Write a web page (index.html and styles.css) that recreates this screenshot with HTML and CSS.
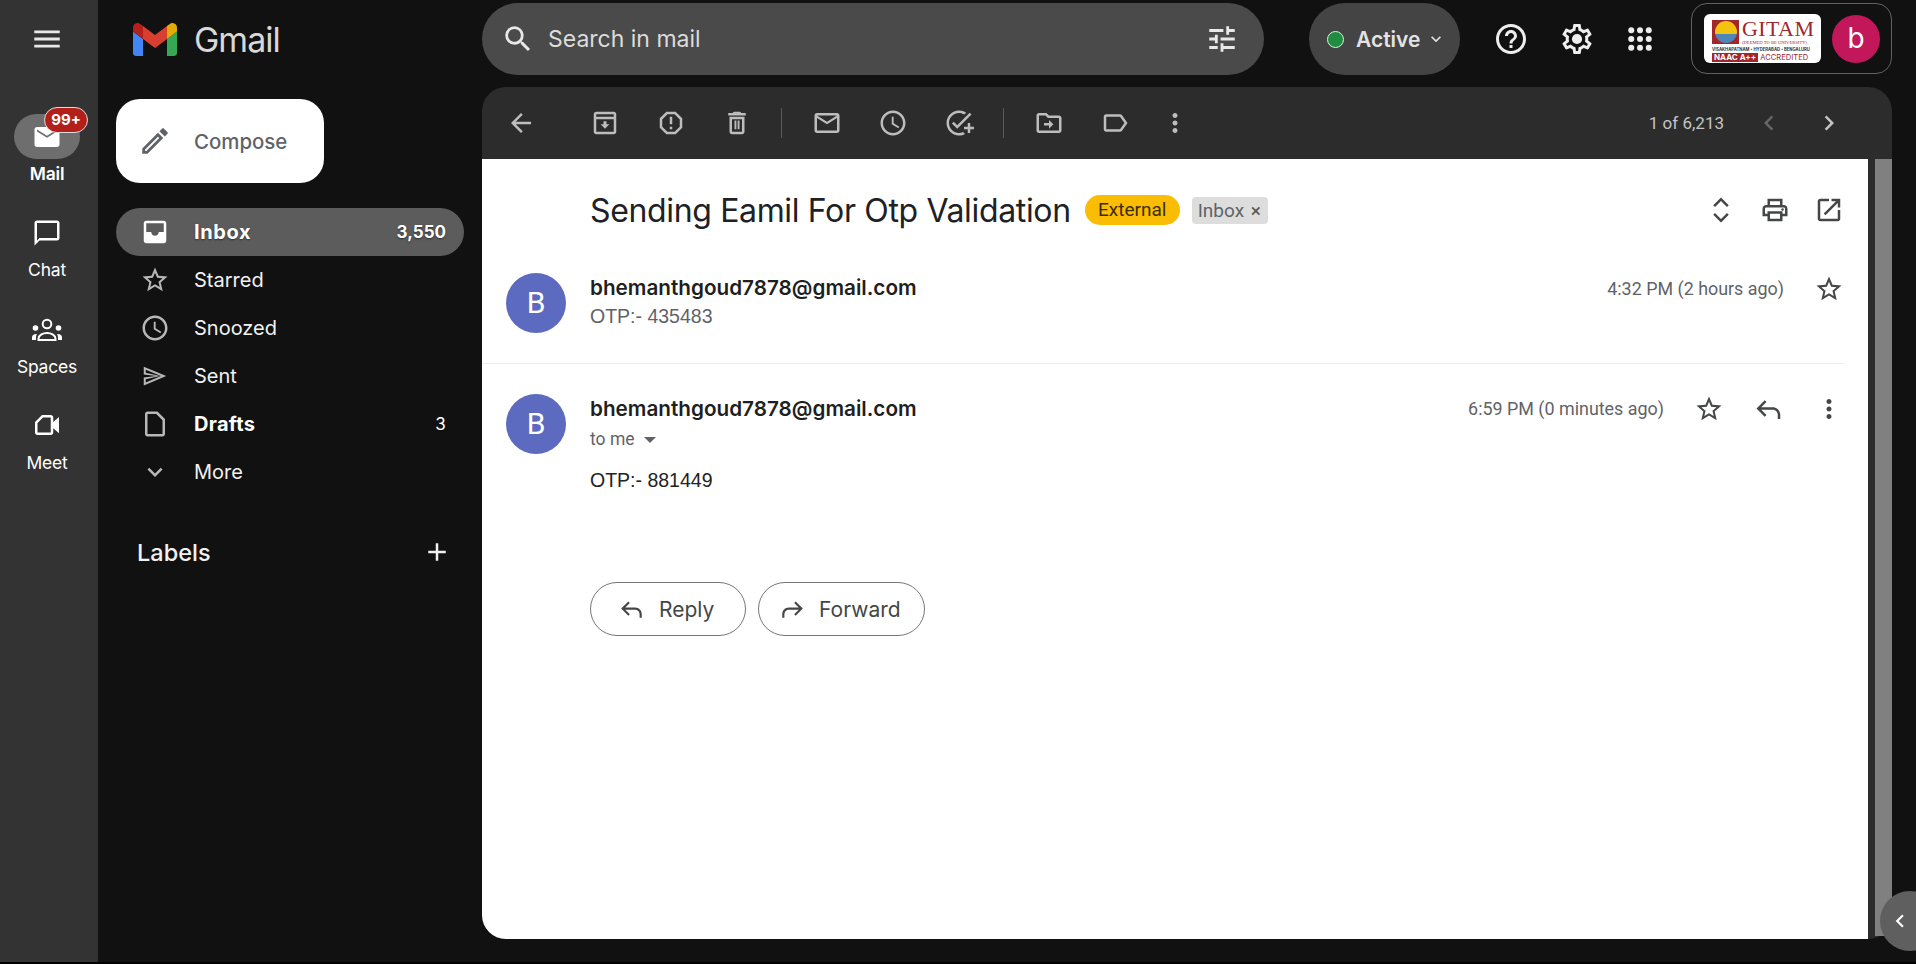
FILE: index.html
```html
<!DOCTYPE HTML>
<html>
    <head>
        <meta charset="utf-8">
        <title>Gmail</title>
        <link rel="stylesheet" href="styles.css">
    </head>

    <body>
        <svg class="sprite" width="0" height="0">
            <symbol id="i-menu" viewBox="0 0 24 24"><path d="M3 18h18v-2H3v2zm0-5h18v-2H3v2zm0-7v2h18V6H3z"/></symbol>
            <symbol id="i-search" viewBox="0 0 24 24"><path d="M15.5 14h-.79l-.28-.27A6.471 6.471 0 0 0 16 9.5 6.5 6.5 0 1 0 9.5 16c1.61 0 3.09-.59 4.23-1.57l.27.28v.79l5 4.99L20.49 19l-4.99-5zm-6 0C7.01 14 5 11.99 5 9.5S7.01 5 9.5 5 14 7.01 14 9.5 11.99 14 9.5 14z"/></symbol>
            <symbol id="i-tune" viewBox="0 0 24 24"><path d="M3 17v2h6v-2H3zM3 5v2h10V5H3zm10 16v-2h8v-2h-8v-2h-2v6h2zM7 9v2H3v2h4v2h2V9H7zm14 4v-2H11v2h10zm-6-4h2V7h4V5h-4V3h-2v6z"/></symbol>
            <symbol id="i-back" viewBox="0 0 24 24"><path d="M20 11H7.83l5.59-5.59L12 4l-8 8 8 8 1.41-1.41L7.83 13H20v-2z"/></symbol>
            <symbol id="i-star" viewBox="0 0 24 24"><path d="M22 9.24l-7.19-.62L12 2 9.19 8.63 2 9.24l5.46 4.73L5.82 21 12 17.27 18.18 21l-1.63-7.03L22 9.24zM12 15.4l-3.76 2.27 1-4.28-3.32-2.88 4.38-.38L12 6.1l1.71 4.04 4.38.38-3.32 2.88 1 4.28L12 15.4z"/></symbol>
            <symbol id="i-clock" viewBox="0 0 24 24"><path d="M11.99 2C6.47 2 2 6.48 2 12s4.47 10 9.99 10C17.52 22 22 17.52 22 12S17.52 2 11.99 2zM12 20c-4.42 0-8-3.58-8-8s3.58-8 8-8 8 3.58 8 8-3.58 8-8 8zm.5-13H11v6l5.25 3.15.75-1.23-4.5-2.67z"/></symbol>
            <symbol id="i-send" viewBox="0 0 24 24"><path fill-rule="evenodd" d="M3 4.5v6.3l10 1.2-10 1.2v6.3L21 12 3 4.5zm1.6 2.4L16.8 12 4.6 17.1v-2.5L16 12 4.6 9.4V6.9z"/></symbol>
            <symbol id="i-draft" viewBox="0 0 24 24"><path d="M14 2H6c-1.1 0-2 .9-2 2v16c0 1.1.9 2 2 2h12c1.1 0 2-.9 2-2V8l-6-6zM6 20V4h7l5 5v11H6z"/></symbol>
            <symbol id="i-down" viewBox="0 0 24 24"><path d="M16.59 8.59L12 13.17 7.41 8.59 6 10l6 6 6-6z"/></symbol>
            <symbol id="i-add" viewBox="0 0 24 24"><path d="M19 13h-6v6h-2v-6H5v-2h6V5h2v6h6v2z"/></symbol>
            <symbol id="i-pencil" viewBox="0 0 24 24"><path d="M3 17.25V21h3.75L17.81 9.94l-3.75-3.75L3 17.25zM5.92 19H5v-.92l9.06-9.06.92.92L5.92 19zM20.71 5.63l-2.34-2.34c-.2-.2-.45-.29-.71-.29s-.51.1-.7.29l-1.83 1.83 3.75 3.75 1.83-1.83c.39-.39.39-1.02 0-1.41z"/></symbol>
            <symbol id="i-inbox" viewBox="0 0 24 24"><path d="M19 3H5c-1.1 0-2 .9-2 2v14c0 1.1.9 2 2 2h14c1.1 0 2-.9 2-2V5c0-1.1-.9-2-2-2zm0 9h-4c0 1.66-1.35 3-3 3s-3-1.34-3-3H5V5h14v7z"/></symbol>
            <symbol id="i-chat" viewBox="0 0 24 24"><path d="M20 2H4c-1.1 0-2 .9-2 2v18l4-4h14c1.1 0 2-.9 2-2V4c0-1.1-.9-2-2-2zm0 14H6l-2 2V4h16v12z"/></symbol>
            <symbol id="i-spaces" viewBox="0 0 30 30">
                <circle cx="15" cy="10" r="4.3" fill="none" stroke="currentColor" stroke-width="2"/>
                <circle cx="3.5" cy="14" r="2.8"/>
                <circle cx="26.5" cy="14" r="2.8"/>
                <path d="M6.5 26v-1.5c0-3 4-5.5 8.5-5.5s8.5 2.5 8.5 5.5V26z" fill="none" stroke="currentColor" stroke-width="2"/>
                <path d="M0 26v-2.5c0-2 1.5-3.5 4.5-3.5h.5c-.6 1-1 2.5-1 4v2zM30 26v-2.5c0-2-1.5-3.5-4.500-3.500h-.5c.6 1 1 2.500 1 4v2z"/>
            </symbol>
            <symbol id="i-meet" viewBox="0 0 24 24"><path d="M8 4L2.4 9.6V18c0 1.1.9 2 2 2H15c1.1 0 2-.9 2-2v-3.5l4.6 4v-13l-4.6 4V6c0-1.1-.9-2-2-2H8zm.8 2H15v12H4.4v-7.6L8.8 6z"/></symbol>
            <symbol id="i-archive" viewBox="0 0 24 24"><path d="M19 3H5c-1.1 0-2 .9-2 2v14c0 1.1.9 2 2 2h14c1.1 0 2-.9 2-2V5c0-1.1-.9-2-2-2zM5 5h14v2H5V5zm0 14V9h14v10H5zm8.2-8.5h-2.4V13H8.5l3.5 3.5 3.5-3.5h-2.3z"/></symbol>
            <symbol id="i-report" viewBox="0 0 24 24"><path d="M15.73 3H8.27L3 8.27v7.46L8.27 21h7.46L21 15.73V8.27L15.73 3zM19 14.9L14.9 19H9.1L5 14.9V9.1L9.1 5h5.8L19 9.1v5.8z"/><path d="M11 7h2v6h-2zm0 8h2v2h-2z"/></symbol>
            <symbol id="i-trash" viewBox="0 0 24 24"><path d="M16 9v10H8V9h8m-1.5-6h-5l-1 1H5v2h14V4h-3.5l-1-1zM18 7H6v12c0 1.1.9 2 2 2h8c1.1 0 2-.9 2-2V7z"/><path d="M10 10h1.5v7H10zm2.5 0H14v7h-1.5z"/></symbol>
            <symbol id="i-mail" viewBox="0 0 24 24"><path d="M22 6c0-1.1-.9-2-2-2H4c-1.1 0-2 .9-2 2v12c0 1.1.9 2 2 2h16c1.1 0 2-.9 2-2V6zm-2 0l-8 5-8-5h16zm0 12H4V8l8 5 8-5v10z"/></symbol>
            <symbol id="i-mailfill" viewBox="0 0 24 24"><path d="M20 4H4c-1.1 0-2 .9-2 2v12c0 1.1.9 2 2 2h16c1.1 0 2-.9 2-2V6c0-1.1-.9-2-2-2zm0 3.5l-8 5-8-5V6l8 5 8-5v1.5z"/></symbol>
            <symbol id="i-task" viewBox="0 0 24 24"><path d="M22 5.18L10.59 16.6l-4.24-4.24 1.41-1.41 2.83 2.83 10-10L22 5.18zM12 20c-4.41 0-8-3.59-8-8s3.59-8 8-8c1.57 0 3.04.46 4.28 1.25l1.45-1.45C16.1 2.67 14.13 2 12 2 6.48 2 2 6.48 2 12s4.48 10 10 10c1.73 0 3.36-.44 4.78-1.22l-1.5-1.5c-1 .46-2.11.72-3.28.72zm7-5h-3v2h3v3h2v-3h3v-2h-3v-3h-2v3z"/></symbol>
            <symbol id="i-move" viewBox="0 0 24 24"><path d="M20 6h-8l-2-2H4c-1.11 0-1.99.89-1.99 2L2 18c0 1.11.89 2 2 2h16c1.11 0 2-.89 2-2V8c0-1.11-.89-2-2-2zm0 12H4V6h5.17l2 2H20v10zm-8-4H8v-2h4V9.5l3.5 3.5-3.5 3.5V14z"/></symbol>
            <symbol id="i-label" viewBox="0 0 24 24"><path d="M17.63 5.84C17.27 5.33 16.67 5 16 5L5 5.01C3.9 5.01 3 5.9 3 7v10c0 1.1.9 1.99 2 1.99L16 19c.67 0 1.27-.33 1.63-.84L22 12l-4.37-6.16zM16 17H5V7h11l3.55 5L16 17z"/></symbol>
            <symbol id="i-dots" viewBox="0 0 24 24"><path d="M12 8c1.1 0 2-.9 2-2s-.9-2-2-2-2 .9-2 2 .9 2 2 2zm0 2c-1.1 0-2 .9-2 2s.9 2 2 2 2-.9 2-2-.9-2-2-2zm0 6c-1.1 0-2 .9-2 2s.9 2 2 2 2-.9 2-2-.9-2-2-2z"/></symbol>
            <symbol id="i-left" viewBox="0 0 24 24"><path d="M15.41 7.41L14 6l-6 6 6 6 1.41-1.41L10.83 12z"/></symbol>
            <symbol id="i-right" viewBox="0 0 24 24"><path d="M10 6L8.59 7.41 13.17 12l-4.58 4.59L10 18l6-6z"/></symbol>
            <symbol id="i-help" viewBox="0 0 24 24"><path d="M11 18h2v-2h-2v2zm1-16C6.48 2 2 6.48 2 12s4.48 10 10 10 10-4.48 10-10S17.52 2 12 2zm0 18c-4.41 0-8-3.59-8-8s3.59-8 8-8 8 3.59 8 8-3.59 8-8 8zm0-14c-2.21 0-4 1.79-4 4h2c0-1.1.9-2 2-2s2 .9 2 2c0 2-3 1.75-3 5h2c0-2.25 3-2.5 3-5 0-2.21-1.79-4-4-4z"/></symbol>
            <symbol id="i-gear" viewBox="0 0 24 24"><path d="M19.43 12.98c.04-.32.07-.64.07-.98 0-.34-.03-.66-.07-.98l2.11-1.65c.19-.15.24-.42.12-.64l-2-3.46c-.09-.16-.26-.25-.44-.25-.06 0-.12.01-.17.03l-2.49 1c-.52-.4-1.08-.73-1.69-.98l-.38-2.65C14.46 2.18 14.25 2 14 2h-4c-.25 0-.46.18-.49.42l-.38 2.65c-.61.25-1.17.59-1.69.98l-2.49-1c-.06-.02-.12-.03-.18-.03-.17 0-.34.09-.43.25l-2 3.46c-.13.22-.07.49.12.64l2.11 1.65c-.04.32-.07.65-.07.98 0 .33.03.66.07.98l-2.11 1.65c-.19.15-.24.42-.12.64l2 3.46c.09.16.26.25.44.25.06 0 .12-.01.17-.03l2.49-1c.52.4 1.08.73 1.69.98l.38 2.65c.03.24.24.42.49.42h4c.25 0 .46-.18.49-.42l.38-2.65c.61-.25 1.17-.59 1.69-.98l2.49 1c.06.02.12.03.18.03.17 0 .34-.09.43-.25l2-3.46c.12-.22.07-.49-.12-.64l-2.11-1.65zm-1.98-1.71c.04.31.05.52.05.73 0 .21-.02.43-.05.73l-.14 1.13.89.7 1.08.84-.7 1.21-1.27-.51-1.04-.42-.9.68c-.43.32-.84.56-1.25.73l-1.06.43-.16 1.13-.2 1.35h-1.4l-.19-1.35-.16-1.13-1.06-.43c-.43-.18-.83-.41-1.23-.71l-.91-.7-1.06.43-1.27.51-.7-1.21 1.08-.84.89-.7-.14-1.13c-.03-.31-.05-.54-.05-.74s.02-.43.05-.73l.14-1.13-.89-.7-1.08-.84.7-1.21 1.27.51 1.04.42.9-.68c.43-.32.84-.56 1.25-.73l1.06-.43.16-1.13.2-1.35h1.39l.19 1.35.16 1.13 1.06.43c.43.18.83.41 1.23.71l.91.7 1.06-.43 1.27-.51.7 1.21-1.07.85-.89.7.14 1.13z"/><circle cx="12" cy="12" r="3.4"/></symbol>
            <symbol id="i-apps" viewBox="0 0 24 24"><circle cx="5" cy="5" r="2.4"/><circle cx="12" cy="5" r="2.4"/><circle cx="19" cy="5" r="2.4"/><circle cx="5" cy="12" r="2.4"/><circle cx="12" cy="12" r="2.4"/><circle cx="19" cy="12" r="2.4"/><circle cx="5" cy="19" r="2.4"/><circle cx="12" cy="19" r="2.4"/><circle cx="19" cy="19" r="2.4"/></symbol>
            <symbol id="i-print" viewBox="0 0 24 24"><path d="M19 8h-1V3H6v5H5c-1.66 0-3 1.34-3 3v6h4v4h12v-4h4v-6c0-1.66-1.34-3-3-3zM8 5h8v3H8V5zm8 12v2H8v-4h8v2zm2-2v-2H6v2H4v-4c0-.55.45-1 1-1h14c.55 0 1 .45 1 1v4h-2z"/><circle cx="18" cy="11.5" r="1"/></symbol>
            <symbol id="i-pop" viewBox="0 0 24 24"><path d="M19 19H5V5h7V3H5c-1.11 0-2 .9-2 2v14c0 1.1.89 2 2 2h14c1.1 0 2-.9 2-2v-7h-2v7zM14 3v2h3.59l-9.83 9.83 1.41 1.41L19 6.41V10h2V3h-7z"/></symbol>
            <symbol id="i-fold" viewBox="0 0 24 24"><path d="M12 2L5.8 8.2l1.4 1.4L12 4.8l4.8 4.8 1.4-1.4L12 2zm0 20l6.2-6.2-1.4-1.4-4.8 4.8-4.8-4.8-1.4 1.4L12 22z"/></symbol>
            <symbol id="i-reply" viewBox="0 0 24 24"><path d="M10 6.4L8.6 5 2 11.6l6.6 6.6 1.4-1.4-4.2-4.2H15c2.2 0 4 1.8 4 4V20h2v-3.4c0-3.3-2.7-6-6-6H5.8L10 6.4z"/></symbol>
            <symbol id="i-forward" viewBox="0 0 24 24"><path d="M14 6.4L15.4 5l6.6 6.6-6.6 6.6-1.4-1.4 4.2-4.2H9c-2.2 0-4 1.8-4 4V20H3v-3.4c0-3.3 2.7-6 6-6h9.2L14 6.4z"/></symbol>
        </svg>

        <div class="app">
            <!-- left rail -->
            <div class="rail">
                <div class="rail-menu"><svg class="ic-34"><use href="#i-menu"/></svg></div>
                <div class="rail-item active">
                    <div class="rail-pill">
                        <svg class="ic-30"><use href="#i-mailfill"/></svg>
                        <span class="badge">99+</span>
                    </div>
                    <span>Mail</span>
                </div>
                <div class="rail-item">
                    <div class="rail-pill"><svg class="ic-30"><use href="#i-chat"/></svg></div>
                    <span>Chat</span>
                </div>
                <div class="rail-item">
                    <div class="rail-pill"><svg class="ic-30"><use href="#i-spaces"/></svg></div>
                    <span>Spaces</span>
                </div>
                <div class="rail-item">
                    <div class="rail-pill"><svg class="ic-30"><use href="#i-meet"/></svg></div>
                    <span>Meet</span>
                </div>
            </div>

            <!-- folders -->
            <div class="nav">
                <div class="brand">
                    <svg class="gmail-m" viewBox="52 42 88 66">
                        <path fill="#4285f4" d="M58 108h14V74L52 59v43c0 3.32 2.69 6 6 6"/>
                        <path fill="#34a853" d="M120 108h14c3.32 0 6-2.69 6-6V59l-20 15"/>
                        <path fill="#e5ab05" d="M120 48v26l20-15v-8c0-7.42-8.47-11.65-14.4-7.2"/>
                        <path fill="#d93f31" d="M72 74V48l24 18 24-18v26L96 92"/>
                        <path fill="#b5201c" d="M52 51v8l20 15V48l-5.6-4.2c-5.94-4.45-14.4-.22-14.4 7.2"/>
                    </svg>
                    <span class="brand-name">Gmail</span>
                </div>
                <div class="compose">
                    <svg class="ic-34"><use href="#i-pencil"/></svg>
                    <span>Compose</span>
                </div>
                <div class="folders">
                    <div class="folder current"><svg class="ic-30"><use href="#i-inbox"/></svg><span class="folder-name">Inbox</span><span class="count">3,550</span></div>
                    <div class="folder"><svg class="ic-30"><use href="#i-star"/></svg><span class="folder-name">Starred</span></div>
                    <div class="folder"><svg class="ic-30"><use href="#i-clock"/></svg><span class="folder-name">Snoozed</span></div>
                    <div class="folder"><svg class="ic-30"><use href="#i-send"/></svg><span class="folder-name">Sent</span></div>
                    <div class="folder strong"><svg class="ic-30"><use href="#i-draft"/></svg><span class="folder-name">Drafts</span><span class="count">3</span></div>
                    <div class="folder"><svg class="ic-30"><use href="#i-down"/></svg><span class="folder-name">More</span></div>
                </div>
                <div class="labels">
                    <span>Labels</span>
                    <svg class="ic-30"><use href="#i-add"/></svg>
                </div>
            </div>

            <div class="main">
                <!-- top bar -->
                <div class="topbar">
                    <div class="search">
                        <svg class="ic-34"><use href="#i-search"/></svg>
                        <span class="search-text">Search in mail</span>
                        <svg class="ic-34 tune"><use href="#i-tune"/></svg>
                    </div>
                    <div class="status">
                        <span class="dot"></span>
                        <span class="status-text">Active</span>
                        <svg class="ic-20"><use href="#i-down"/></svg>
                    </div>
                    <div class="top-icons">
                        <svg class="ic-36"><use href="#i-help"/></svg>
                        <svg class="ic-36"><use href="#i-gear"/></svg>
                        <svg class="ic-30"><use href="#i-apps"/></svg>
                    </div>
                    <div class="account">
                        <div class="org-logo">
                            <div class="org-top">
                                <div class="emblem"><span class="emblem-sun"></span></div>
                                <div class="org-name">
                                    <span class="org-title">GITAM</span>
                                    <span class="org-sub">(DEEMED TO BE UNIVERSITY)</span>
                                </div>
                            </div>
                            <div class="org-cities">VISAKHAPATNAM • HYDERABAD • BENGALURU</div>
                            <div class="org-naac"><b>NAAC A++</b><span>ACCREDITED</span></div>
                        </div>
                        <div class="avatar-me">b</div>
                    </div>
                </div>

                <!-- mail panel -->
                <div class="panel">
                    <div class="toolbar">
                        <svg class="ic-30 tool back"><use href="#i-back"/></svg>
                        <svg class="ic-30 tool"><use href="#i-archive"/></svg>
                        <svg class="ic-30 tool"><use href="#i-report"/></svg>
                        <svg class="ic-30 tool"><use href="#i-trash"/></svg>
                        <span class="sep"></span>
                        <svg class="ic-30 tool"><use href="#i-mail"/></svg>
                        <svg class="ic-30 tool"><use href="#i-clock"/></svg>
                        <svg class="ic-30 tool"><use href="#i-task"/></svg>
                        <span class="sep"></span>
                        <svg class="ic-30 tool"><use href="#i-move"/></svg>
                        <svg class="ic-30 tool label-tool"><use href="#i-label"/></svg>
                        <svg class="ic-30 tool"><use href="#i-dots"/></svg>
                        <span class="pager">1 of 6,213</span>
                        <svg class="ic-30 tool faded"><use href="#i-left"/></svg>
                        <svg class="ic-30 tool next"><use href="#i-right"/></svg>
                    </div>
                    <div class="panel-body">
                        <div class="sheet">
                            <div class="subject-row">
                                <h2 class="subject">Sending Eamil For Otp Validation</h2>
                                <span class="chip-ext">External</span>
                                <span class="chip-inbox">Inbox <i>×</i></span>
                                <div class="subject-icons">
                                    <svg class="ic-30"><use href="#i-fold"/></svg>
                                    <svg class="ic-30"><use href="#i-print"/></svg>
                                    <svg class="ic-30"><use href="#i-pop"/></svg>
                                </div>
                            </div>

                            <div class="msg collapsed">
                                <div class="avatar">B</div>
                                <div class="msg-main">
                                    <div class="sender">bhemanthgoud7878@gmail.com</div>
                                    <div class="snippet">OTP:- 435483</div>
                                </div>
                                <div class="msg-side">
                                    <span class="time">4:32 PM (2 hours ago)</span>
                                    <svg class="ic-30"><use href="#i-star"/></svg>
                                </div>
                            </div>

                            <div class="msg">
                                <div class="avatar">B</div>
                                <div class="msg-main">
                                    <div class="sender">bhemanthgoud7878@gmail.com</div>
                                    <div class="to-me">to me <span class="caret"></span></div>
                                    <div class="msg-text">OTP:- 881449</div>
                                </div>
                                <div class="msg-side">
                                    <span class="time">6:59 PM (0 minutes ago)</span>
                                    <svg class="ic-30"><use href="#i-star"/></svg>
                                    <svg class="ic-30"><use href="#i-reply"/></svg>
                                    <svg class="ic-30"><use href="#i-dots"/></svg>
                                </div>
                            </div>

                            <div class="actions">
                                <div class="btn btn-reply"><svg class="ic-26"><use href="#i-reply"/></svg>Reply</div>
                                <div class="btn btn-forward"><svg class="ic-26"><use href="#i-forward"/></svg>Forward</div>
                            </div>
                        </div>
                        <div class="scrollbar"></div>
                    </div>
                </div>
            </div>
        </div>

        <div class="side-toggle"><svg class="ic-26"><use href="#i-left"/></svg></div>
    </body>
</html>
```

FILE: styles.css
```css
*{
    box-sizing: border-box;
}

body{
    margin: 0;
    height: 964px;
    overflow: hidden;
    background-color: #000;
    font-family: "Inter", "Liberation Sans", sans-serif;
    color: #e3e3e3;
}

svg{
    fill: currentColor;
    flex: none;
    display: block;
}

.sprite{
    position: absolute;
}

.ic-20{ width: 20px; height: 20px; }
.ic-26{ width: 26px; height: 26px; }
.ic-30{ width: 30px; height: 30px; }
.ic-34{ width: 34px; height: 34px; }
.ic-36{ width: 36px; height: 36px; }

.app{
    display: flex;
    height: 962px;
    background-color: #111;
}

/* rail */
.rail{
    width: 98px;
    flex: none;
    background-color: #333;
    padding-right: 4px;
    display: flex;
    flex-direction: column;
    align-items: center;
    color: #fff;
}

.rail-menu{
    height: 78px;
    margin-bottom: 36px;
    display: flex;
    align-items: center;
    color: #e8e8e8;
}

.rail-item{
    height: 96.3px;
    display: flex;
    flex-direction: column;
    align-items: center;
    font-size: 17.5px;
    line-height: 20px;
    letter-spacing: -0.2px;
    gap: 5px;
}

.rail-item.active{
    font-weight: 600;
}

.rail-pill{
    width: 66px;
    height: 45px;
    flex: none;
    border-radius: 23px;
    display: flex;
    align-items: center;
    justify-content: center;
    position: relative;
}

.active .rail-pill{
    background-color: #6e6e6e;
}

.badge{
    position: absolute;
    left: 30px;
    top: -7px;
    width: 44px;
    height: 26px;
    border-radius: 13px;
    background-color: #b3201a;
    border: 1px solid #ddd;
    color: #fff;
    font-size: 15px;
    font-weight: 700;
    line-height: 23px;
    text-align: center;
    letter-spacing: 0;
}

/* folders */
.nav{
    width: 384px;
    flex: none;
    padding-left: 18px;
}

.brand{
    height: 78px;
    display: flex;
    align-items: center;
    padding-left: 17px;
}

.gmail-m{
    width: 44px;
    height: 33px;
}

.brand-name{
    margin-left: 17px;
    font-size: 34px;
    letter-spacing: -1px;
    color: #d8d8d8;
}

.compose{
    margin-top: 21px;
    width: 208px;
    height: 84px;
    border-radius: 24px;
    background-color: #fff;
    color: #5f6368;
    display: flex;
    align-items: center;
    padding-left: 22px;
    font-size: 20.4px;
    font-weight: 500;
    gap: 22px;
}

.folders{
    margin-top: 25px;
    width: 348px;
}

.folder{
    height: 48px;
    display: flex;
    align-items: center;
    border-radius: 24px;
    padding: 0 18px 0 24px;
    font-size: 20px;
    color: #f1f1f1;
}

.folder svg{
    color: #b8b8b8;
}

.folder-name{
    margin-left: 24px;
    flex: 1;
}

.count{
    font-size: 17px;
}

.folder.current{
    background-color: #5c5c5c;
    font-weight: 700;
    color: #fff;
    text-shadow: 0 1px 2px rgba(0,0,0,.5);
}

.folder.current .folder-name{
    letter-spacing: 0.6px;
}

.folder.current svg{
    color: #fff;
}

.folder.strong{
    font-weight: 700;
    letter-spacing: 0.3px;
    color: #fff;
}

.folder.strong .count{
    font-weight: 400;
}

.labels{
    margin-top: 36px;
    width: 348px;
    height: 40px;
    display: flex;
    align-items: center;
    justify-content: space-between;
    padding: 0 12px 0 21px;
    font-size: 23.5px;
    font-weight: 500;
    color: #f1f1f1;
}

/* top bar */
.main{
    flex: 1;
    min-width: 0;
    padding-right: 24px;
    display: flex;
    flex-direction: column;
}

.topbar{
    height: 87px;
    padding-top: 3px;
    display: flex;
    align-items: flex-start;
}

.search{
    width: 782px;
    height: 72px;
    border-radius: 36px;
    background-color: #4a4a4a;
    display: flex;
    align-items: center;
    padding: 0 25px 0 19px;
    color: #e8e8e8;
}

.search-text{
    margin-left: 13px;
    flex: 1;
    font-size: 23px;
    color: #dcdcdc;
}

.status{
    margin-left: 45px;
    width: 151px;
    height: 72px;
    border-radius: 36px;
    background-color: #444;
    display: flex;
    align-items: center;
    padding-left: 18px;
    font-size: 21px;
    font-weight: 600;
    color: #e3e3e3;
}

.dot{
    width: 17px;
    height: 17px;
    border-radius: 50%;
    background-color: #1e8e3e;
    border: 1px solid #e8e8e8;
}

.status-text{
    margin: 0 6px 0 12px;
}

.top-icons{
    margin-left: 33px;
    height: 72px;
    width: 167px;
    flex: none;
    display: flex;
    align-items: center;
    gap: 30px;
    color: #eee;
}

.account{
    margin-left: 31px;
    width: 201px;
    flex: none;
    height: 71px;
    border: 1px solid #5f6368;
    border-radius: 16px;
    display: flex;
    align-items: center;
    padding-left: 12px;
}

.org-logo{
    width: 117px;
    height: 49px;
    flex: none;
    background-color: #fff;
    border-radius: 6px;
    padding: 4px 6px 0 8px;
    color: #a3262c;
}

.org-top{
    display: flex;
    height: 28px;
}

.emblem{
    width: 27px;
    height: 24px;
    margin-top: 2px;
    flex: none;
    background-color: #a3262c;
    display: flex;
    align-items: center;
    justify-content: center;
}

.emblem-sun{
    width: 22px;
    height: 22px;
    border-radius: 50%;
    background: linear-gradient(#f2c40f 58%, #4f86b8 58%);
}

.org-name{
    margin-left: 3px;
    display: flex;
    flex-direction: column;
    min-width: 0;
}

.org-title{
    font-family: "Liberation Serif", serif;
    font-size: 22px;
    line-height: 22px;
    height: 22px;
    letter-spacing: 0.4px;
}

.org-sub{
    font-family: "Liberation Serif", serif;
    font-size: 4.6px;
    line-height: 6px;
    white-space: nowrap;
}

.org-cities{
    font-size: 4.2px;
    line-height: 7px;
    font-weight: 700;
    color: #333;
    white-space: nowrap;
}

.org-naac{
    display: flex;
    align-items: center;
    font-size: 8px;
    line-height: 9px;
    white-space: nowrap;
}

.org-naac b{
    background-color: #a3262c;
    color: #fff;
    padding: 0 2px;
    margin-right: 2px;
}

.org-naac span{
    font-size: 7.6px;
}

.avatar-me{
    margin-left: 11px;
    width: 48px;
    height: 48px;
    flex: none;
    border-radius: 50%;
    background-color: #c2185b;
    color: #fff;
    font-size: 28px;
    line-height: 46px;
    text-align: center;
}

/* mail panel */
.panel{
    flex: 1;
    min-height: 0;
    display: flex;
    flex-direction: column;
    margin-bottom: 23px;
    background-color: #2c2c2c;
    border-radius: 24px;
}

.toolbar{
    height: 72px;
    flex: none;
    display: flex;
    align-items: center;
    padding: 0 48px 0 24px;
    color: #bdbdbd;
}

.tool{
    margin-right: 36px;
}

.tool.back{
    margin-right: 54px;
}

.tool.label-tool{
    margin-right: 30px;
}

.sep{
    width: 1px;
    height: 30px;
    background-color: #5a5a5a;
    margin: 0 30px 0 -7px;
}

.pager{
    margin-left: auto;
    font-size: 17px;
    margin-right: 30px;
    color: #c4c4c4;
    font-family: "Roboto", sans-serif;
}

.tool.faded{
    color: #666;
    margin-right: 30px;
}

.tool.next{
    margin-right: 0;
    color: #c4c4c4;
}

.panel-body{
    flex: 1;
    min-height: 0;
    display: flex;
}

.sheet{
    width: 1386px;
    flex: none;
    background-color: #fff;
    border-bottom-left-radius: 24px;
    color: #202124;
}

.scrollbar{
    width: 17px;
    margin-left: 7px;
    margin-bottom: 3px;
    background-color: #808080;
    border-bottom-right-radius: 4px;
}

.subject-row{
    height: 102px;
    display: flex;
    align-items: center;
    padding: 0 24px 0 108px;
}

.subject{
    margin: 0;
    font-size: 32px;
    font-weight: 400;
    letter-spacing: -0.35px;
    white-space: nowrap;
}

.chip-ext{
    margin-left: 14px;
    width: 95px;
    height: 30px;
    border-radius: 15px;
    background-color: #fbbc04;
    font-size: 19px;
    line-height: 30px;
    text-align: center;
    color: #3c2d00;
    font-family: "Roboto", sans-serif;
}

.chip-inbox{
    margin-left: 12px;
    width: 76px;
    height: 27px;
    border-radius: 4px;
    background-color: #ddd;
    color: #5f6368;
    font-size: 19px;
    line-height: 27px;
    padding-left: 6px;
    font-family: "Roboto", sans-serif;
    white-space: nowrap;
}

.chip-inbox i{
    font-style: normal;
    color: #555;
    margin-left: 2px;
}

.subject-icons{
    margin-left: auto;
    display: flex;
    gap: 24px;
    color: #444746;
}

.msg{
    display: flex;
    margin-right: 24px;
    padding: 30px 0 0 24px;
}

.msg.collapsed{
    height: 103px;
    padding-top: 12px;
    border-bottom: 1px solid #eee;
}

.avatar{
    width: 60px;
    height: 60px;
    flex: none;
    border-radius: 50%;
    background-color: #5c6bc0;
    color: #fff;
    font-size: 30px;
    line-height: 60px;
    text-align: center;
    font-family: "Roboto", sans-serif;
}

.msg-main{
    margin-left: 24px;
    flex: 1;
}

.sender{
    font-size: 20.7px;
    font-weight: 600;
    line-height: 26px;
    margin-top: 2px;
    color: #1f1f1f;
}

.snippet{
    font-family: "Liberation Sans", sans-serif;
    font-size: 19.5px;
    line-height: 22px;
    margin-top: 4px;
    color: #5f6368;
}

.to-me{
    font-family: "Roboto", sans-serif;
    font-size: 17.5px;
    line-height: 20px;
    margin-top: 7px;
    color: #5f6368;
}

.caret{
    display: inline-block;
    margin-left: 5px;
    vertical-align: middle;
    border-top: 6px solid #5f6368;
    border-left: 6px solid transparent;
    border-right: 6px solid transparent;
}

.msg-text{
    font-family: "Liberation Sans", sans-serif;
    font-size: 19.5px;
    line-height: 22px;
    margin-top: 20px;
    color: #222;
}

.msg-side{
    display: flex;
    align-items: center;
    height: 30px;
    gap: 30px;
    color: #444746;
}

.collapsed .msg-side{
    margin-top: 1px;
}

.time{
    font-family: "Roboto", sans-serif;
    font-size: 17.9px;
    line-height: 24px;
    color: #5f6368;
}

.actions{
    margin-top: 91px;
    padding-left: 108px;
    display: flex;
    gap: 12px;
}

.btn{
    height: 54px;
    border: 1px solid #747775;
    border-radius: 27px;
    display: flex;
    align-items: center;
    gap: 14px;
    font-size: 21px;
    color: #444746;
}

.btn-reply{
    width: 156px;
    padding-left: 28px;
}

.btn-forward{
    width: 167px;
    padding-left: 20px;
}

.side-toggle{
    position: absolute;
    left: 1880px;
    top: 891px;
    width: 60px;
    height: 60px;
    border-radius: 50%;
    background-color: #5f5f5f;
    color: #fff;
    display: flex;
    align-items: center;
    padding-left: 7px;
}
```
